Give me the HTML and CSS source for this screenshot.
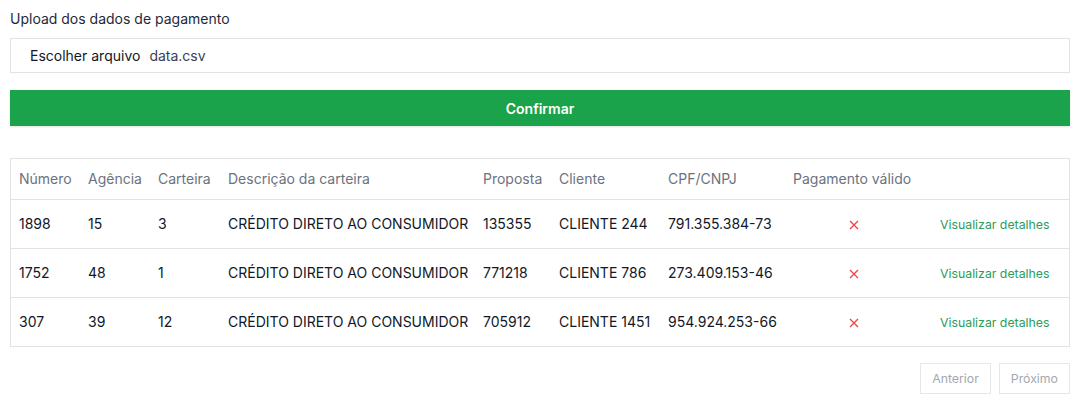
FILE: index.html
```
<!DOCTYPE html>
<html lang="pt-BR">
<head>
<meta charset="utf-8">
<title>Upload</title>
<link rel="stylesheet" href="styles.css">
</head>
<body>
<div class="page">
  <label class="title">Upload dos dados de pagamento</label>
  <div class="file-box">
    <span class="file-btn">Escolher arquivo</span>
    <span class="file-name">data.csv</span>
  </div>
  <button class="confirm">Confirmar</button>

  <div class="table-wrap">
    <table>
      <colgroup>
        <col class="c1"><col class="c2"><col class="c3"><col class="c4"><col class="c5"><col class="c6"><col class="c7"><col class="c8"><col class="c9">
      </colgroup>
      <thead>
        <tr>
          <th>Número</th><th>Agência</th><th>Carteira</th><th>Descrição da carteira</th><th>Proposta</th><th>Cliente</th><th>CPF/CNPJ</th><th>Pagamento válido</th><th></th>
        </tr>
      </thead>
      <tbody>
        <tr>
          <td>1898</td><td>15</td><td>3</td><td>CRÉDITO DIRETO AO CONSUMIDOR</td><td>135355</td><td>CLIENTE 244</td><td>791.355.384-73</td>
          <td class="status"><svg width="10" height="10" viewBox="0 0 10 10"><path d="M1 1L9 9M9 1L1 9" stroke="#ef4444" stroke-width="1.3" fill="none"/></svg></td>
          <td class="action"><a href="#">Visualizar detalhes</a></td>
        </tr>
        <tr>
          <td>1752</td><td>48</td><td>1</td><td>CRÉDITO DIRETO AO CONSUMIDOR</td><td>771218</td><td>CLIENTE 786</td><td>273.409.153-46</td>
          <td class="status"><svg width="10" height="10" viewBox="0 0 10 10"><path d="M1 1L9 9M9 1L1 9" stroke="#ef4444" stroke-width="1.3" fill="none"/></svg></td>
          <td class="action"><a href="#">Visualizar detalhes</a></td>
        </tr>
        <tr>
          <td>307</td><td>39</td><td>12</td><td>CRÉDITO DIRETO AO CONSUMIDOR</td><td>705912</td><td>CLIENTE 1451</td><td>954.924.253-66</td>
          <td class="status"><svg width="10" height="10" viewBox="0 0 10 10"><path d="M1 1L9 9M9 1L1 9" stroke="#ef4444" stroke-width="1.3" fill="none"/></svg></td>
          <td class="action"><a href="#">Visualizar detalhes</a></td>
        </tr>
      </tbody>
    </table>
  </div>

  <div class="pager">
    <button class="pg">Anterior</button>
    <button class="pg">Próximo</button>
  </div>
</div>
</body>
</html>
```
FILE: styles.css
```
* { box-sizing: border-box; }
html, body { margin: 0; padding: 0; background: #fff; }
body {
  font-family: Inter, "Noto Sans", sans-serif;
  font-size: 14px;
  color: #111827;
}
.page {
  padding: 10px 21px 0 10px;
  display: flex;
  flex-direction: column;
}
.title {
  display: block;
  height: 18px;
  line-height: 18px;
  color: #1f2937;
  margin-bottom: 10px;
}
.file-box {
  height: 35px;
  border: 1px solid #e2e2e2;
  display: flex;
  align-items: center;
  padding-left: 19px;
}
.file-btn { color: #111827; margin-right: 9px; }
.file-name { color: #374151; }
.confirm {
  margin-top: 17px;
  height: 36px;
  border: none;
  background: #1aa34a;
  color: #fff;
  font-family: inherit;
  font-size: 14px;
  font-weight: 600;
  box-shadow: 0 1px 2px rgba(0,0,0,0.12);
}
.table-wrap {
  margin-top: 32px;
  border: 1px solid #e2e2e2;
}
table {
  width: 100%;
  border-collapse: collapse;
  table-layout: fixed;
}
.c1 { width: 69px; }
.c2 { width: 70px; }
.c3 { width: 70px; }
.c4 { width: 255px; }
.c5 { width: 76px; }
.c6 { width: 109px; }
.c7 { width: 125px; }
.c8 { width: 138px; }
.c9 { width: auto; }
th {
  text-align: left;
  font-weight: 400;
  color: #6b7280;
  height: 40px;
  padding: 0 8px;
  border-bottom: 1px solid #e2e2e2;
  white-space: nowrap;
}
td {
  height: 49px;
  padding: 0 8px;
  border-bottom: 1px solid #e2e2e2;
  white-space: nowrap;
  color: #111827;
}
tbody tr:last-child td { border-bottom: none; }
td.status { text-align: center; }
td.status svg { display: inline-block; vertical-align: middle; }
td.action { padding-left: 17px; }
td.action a {
  color: #2a9d5c;
  font-size: 12.3px;
  text-decoration: none;
}
.pager {
  margin-top: 16px;
  display: flex;
  justify-content: flex-end;
  gap: 8px;
}
.pg {
  height: 31px;
  padding: 0 11px;
  border: 1px solid #e5e7eb;
  background: #fff;
  color: #a3a8b0;
  font-family: inherit;
  font-size: 12.3px;
}
```
